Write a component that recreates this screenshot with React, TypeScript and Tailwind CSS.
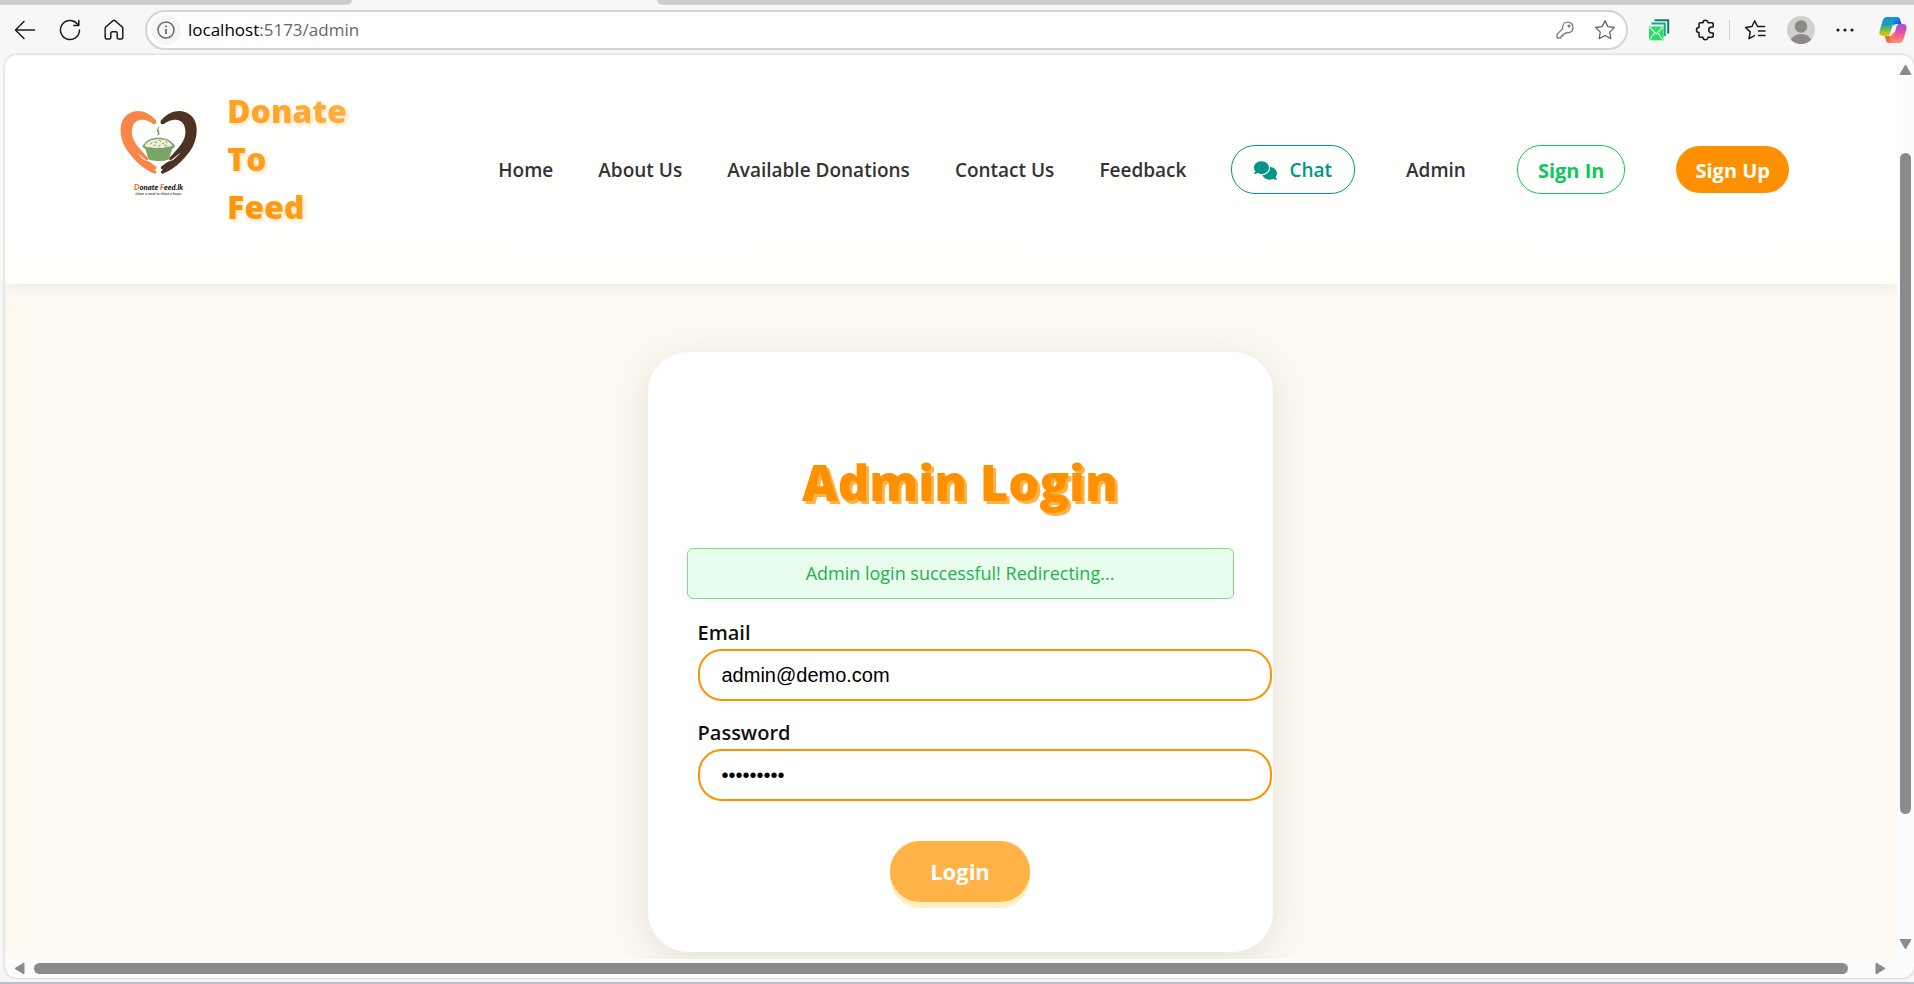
import { useState } from "react";
import { FaComments } from "react-icons/fa6";

const navLinks = ["Home", "About Us", "Available Donations", "Contact Us", "Feedback"];
const siteName = ["Donate", "To", "Feed"];

function BackIcon() {
  return (
    <svg width="22" height="22" viewBox="0 0 22 22" fill="none" stroke="#1b1b1b" strokeWidth="1.5" strokeLinecap="round" strokeLinejoin="round">
      <path d="M20.5 11H2M10 2.5 1.5 11l8.5 8.5" />
    </svg>
  );
}

function ReloadIcon() {
  return (
    <svg width="22" height="22" viewBox="0 0 22 22" fill="none" stroke="#1b1b1b" strokeWidth="1.5" strokeLinecap="round" strokeLinejoin="round">
      <path d="M20.5 11a9.5 9.5 0 1 1-2.6-6.5L19.5 6M19.8 1.5V6.5H14.8" />
    </svg>
  );
}

function HomeIcon() {
  return (
    <svg width="20" height="22" viewBox="0 0 20 22" fill="none" stroke="#1b1b1b" strokeWidth="1.5" strokeLinejoin="round">
      <path d="M1.2 9.6c0-.8.3-1.4.9-1.9L9 1.6c.6-.5 1.4-.5 2 0l6.900 6.100c.6.5.9 1.100.9 1.900V18.500c0 .9-.6 1.500-1.500 1.500h-2.600c-.9 0-1.500-.6-1.500-1.500v-4.200c0-.9-.6-1.500-1.500-1.500H8.300c-.9 0-1.500.6-1.500 1.500v4.200c0 .9-.6 1.500-1.500 1.500H2.700c-.9 0-1.500-.6-1.500-1.500z" />
    </svg>
  );
}

function InfoIcon() {
  return (
    <svg width="18" height="18" viewBox="0 0 18 18" fill="none" stroke="#6a6a6a" strokeWidth="1.5">
      <circle cx="9" cy="9" r="8" />
      <path d="M9 8v5" strokeWidth="1.800" />
      <circle cx="9" cy="5.400" r="1" fill="#6a6a6a" stroke="none" />
    </svg>
  );
}

function KeyIcon() {
  return (
    <svg width="18" height="18" viewBox="0 0 18 18" fill="none" stroke="#6f6f6f" strokeWidth="1.200" strokeLinejoin="round">
      <path d="M11.500 1a5.400 5.400 0 1 1-1.300 10.600L8.800 13H7v1.900H5.200v1.900H1v-3.400l5.700-5.700A5.400 5.400 0 0 1 11.500 1z" />
      <circle cx="13" cy="5" r="1" />
    </svg>
  );
}

function StarIcon() {
  return (
    <svg width="22" height="22" viewBox="0 0 22 22" fill="none" stroke="#666" strokeWidth="1.300" strokeLinejoin="round">
      <path d="m11 1.700 2.900 5.900 6.500.9-4.700 4.600 1.100 6.500L11 16.500l-5.800 3.100 1.100-6.500L1.600 8.500l6.500-.9z" />
    </svg>
  );
}

function MailStackIcon() {
  return (
    <svg width="22" height="22" viewBox="0 0 22 22" fill="none">
      <path d="M6.500 1.200h13.700v13.300" stroke="#0d7f6f" strokeWidth="2" />
      <path d="M3.500 4.600h13.200v12.400" stroke="#14a58e" strokeWidth="2" />
      <rect x="1" y="7.500" width="14.500" height="13.800" fill="#2bdc68" />
      <path d="m1.500 8 6.700 7 6.800-7M1.500 21l5-7M15 21l-5-7" stroke="#d9ffe6" strokeWidth="1.100" />
    </svg>
  );
}

function PuzzleIcon() {
  return (
    <svg width="20" height="22" viewBox="0 0 20 22" fill="none" stroke="#1b1b1b" strokeWidth="1.600" strokeLinejoin="round">
      <path d="M8 3.800a2.500 2.500 0 0 1 5 0H17q1.200 0 1.200 1.200v3h-1.500a3 3 0 0 0 0 6h1.500v3q0 1.200-1.200 1.200H13a2.500 2.500 0 0 1-5 0H5.200Q4 18.200 4 17v-3.500a2.500 2.500 0 0 1 0-5V5q0-1.200 1.200-1.200z" />
    </svg>
  );
}

function FavoritesIcon() {
  return (
    <svg width="22" height="22" viewBox="0 0 22 22" fill="none" stroke="#1b1b1b" strokeWidth="1.500" strokeLinecap="round" strokeLinejoin="round">
      <path d="M13.500 7.500 10.700 1.800 8 7.500l-6.500.9 4.700 4.500-1.200 6.800 5.500-3M13.500 7.600h7M14.500 12h6.500M14.500 16.500h6.500" />
    </svg>
  );
}

function ProfileIcon() {
  return (
    <svg width="28" height="28" viewBox="0 0 28 28">
      <clipPath id="avatar"><circle cx="14" cy="14" r="14" /></clipPath>
      <g clipPath="url(#avatar)">
        <rect width="28" height="28" fill="#d2d0cd" />
        <circle cx="14" cy="10.500" r="6.200" fill="#8b8885" />
        <ellipse cx="14" cy="26" rx="10.500" ry="8" fill="#8b8885" />
      </g>
    </svg>
  );
}

function CopilotIcon() {
  return (
    <svg width="28" height="28" viewBox="0 0 28 28">
      <defs>
        <linearGradient id="cpLeft" x1="0" y1="0" x2="0" y2="1">
          <stop offset="0" stopColor="#1b8fe8" /><stop offset=".4" stopColor="#1c9fb0" /><stop offset=".7" stopColor="#7cc243" /><stop offset="1" stopColor="#f5c400" />
        </linearGradient>
        <linearGradient id="cpRight" x1="0" y1="0" x2="0" y2="1">
          <stop offset="0" stopColor="#a64be0" /><stop offset=".5" stopColor="#e8559f" /><stop offset="1" stopColor="#ff9560" />
        </linearGradient>
        <linearGradient id="cpTop" x1="0" y1="0" x2="1" y2="1">
          <stop offset="0" stopColor="#12b4f0" /><stop offset="1" stopColor="#1440b8" />
        </linearGradient>
        <linearGradient id="cpBottom" x1="0" y1="0" x2="1" y2="0">
          <stop offset="0" stopColor="#f0632f" /><stop offset="1" stopColor="#f78a6c" />
        </linearGradient>
      </defs>
      <path d="M12 1h6c1.800 0 2.700 1 3.200 2.700L22.500 8h-5c-1.500 0-2.300.7-2.800 2.300z" fill="url(#cpTop)" />
      <path d="M16 27h-6c-1.800 0-2.600-1-3.100-2.700L5.800 20h4.700c1.500 0 2.300-.7 2.800-2.300l2.500-2z" fill="url(#cpBottom)" />
      <path d="M7.500 1H18c-1.500 0-2.200 1-2.700 2.700L11 17.500c-.6 1.700-1.500 2.500-3.200 2.500H4c-3.200 0-4.200-2.200-3.300-5.500L3.500 5C4.300 2.300 5.500 1 7.500 1z" fill="url(#cpLeft)" />
      <path d="M20.500 27H11c1.500 0 2.200-1 2.700-2.700L17.500 10.500C18 8.800 18.900 8 20.500 8H24c3.200 0 4.200 2.200 3.300 5.500L24.500 23c-.8 2.700-2 4-4 4z" fill="url(#cpRight)" />
    </svg>
  );
}

function Logo() {
  return (
    <svg className="mb-3 h-[94px] w-[87px] shrink-0" viewBox="15 18 261 282" role="img" aria-label="Donate Feed.lk">
      <path d="M137 71C140 66 140 62 134 57C108 31 77 26 52 44C26 63 27 107 45 140C62 171 97 206 130 220C137 223 142 218 138 213L132 208C139 210 142 204 137 199L123 188C114 182 105 183 99 177L80 158C91 164 100 175 109 180C114 182 117 177 112 172C94 151 72 131 67 108C62 82 72 60 94 59C112 59 121 66 128 71C131 73 135 73 137 71Z" fill="#f98649" />
      <path d="M153 71C150 66 151 62 157 57C183 31 215 26 240 44C266 63 265 107 248 140C231 171 195 206 162 220C155 223 150 218 154 213L160 208C153 210 150 204 155 199L169 188C178 182 187 183 193 177L212 158C201 164 192 175 183 180C178 182 175 177 180 172C198 151 220 131 225 108C230 82 220 60 198 59C180 59 170 66 163 71C160 73 156 73 153 71Z" fill="#4d3323" />
      <path d="M103 131C111 120 124 113 146 113C167 113 181 120 190 131L195 138C194 142 191 144 187 146L177 177C171 185 121 185 115 177L106 146C101 144 98 142 97 138Z" fill="#79a566" />
      <path d="M104 137C112 124 126 118 146 118C166 118 179 124 187 137C181 142 173 138 166 142C158 146 150 142 142 144C132 146 125 141 118 142C112 142 107 141 104 137Z" fill="#f1eddd" />
      <path d="m121 132 6-4m7-2 6 1m8-5 5 2m4 6 6 2m3-7 6 3m-41 7 6 1m8 3 6-3m13 0 6 1" stroke="#6b9a55" strokeWidth="3" />
      <path d="M147 81C136 89 154 94 143 105M143 90C140 96 149 98 147 103" stroke="#5f9150" strokeWidth="3" fill="none" strokeLinecap="round" />
      <text x="146" y="270" textAnchor="middle" fontSize="23" fontStyle="italic" fontWeight="900" fontFamily="Lato, sans-serif" fill="#171311">
        <tspan fill="#f2602a">D</tspan>onate <tspan fill="#f2602a">F</tspan>eed.lk
      </text>
      <text x="146" y="285" textAnchor="middle" fontSize="10" fontWeight="700" fontFamily="Liberation Sans, sans-serif" fill="#555">share a meal to share a hope.</text>
    </svg>
  );
}

function Arrow({ points }: { points: string }) {
  return (
    <svg width="13" height="13" viewBox="0 0 13 13" className="shrink-0" fill="#8b8b8b" stroke="#8b8b8b" strokeWidth="1" strokeLinejoin="round">
      <polygon points={points} />
    </svg>
  );
}

function BrowserBar() {
  return (
    <div className="shrink-0">
      <div className="flex h-[5px] w-full">
        <div className="h-[5px] w-[18.4%] rounded-br-lg border-b border-[#dcdcdc] bg-[#cdcdcd]" />
        <div className="h-[5px] flex-1 bg-[#f7f7f7]" />
        <div className="h-[5px] w-[65.7%] rounded-bl-lg border-b border-[#dcdcdc] bg-[#cdcdcd]" />
      </div>
      <div className="flex h-[49px] items-center pr-[7px] pl-3.5">
        <div className="flex w-[131px] shrink-0 items-center gap-[23px]">
          <button aria-label="Back"><BackIcon /></button>
          <button aria-label="Refresh"><ReloadIcon /></button>
          <button aria-label="Home"><HomeIcon /></button>
        </div>
        <div className="flex h-10 flex-1 items-center rounded-full border-2 border-[#d4d4d4] bg-white pr-2.5 pl-1">
          <button aria-label="View site information" className="flex size-[30px] items-center justify-center rounded-full bg-[#f5f5f5]"><InfoIcon /></button>
          <div className="ml-[7px] flex-1 text-[17px] text-[#666]"><span className="text-black">localhost</span>:5173/admin</div>
          <div className="flex items-center gap-5">
            <button aria-label="Saved passwords"><KeyIcon /></button>
            <button aria-label="Add to favorites"><StarIcon /></button>
          </div>
        </div>
        <div className="ml-5 flex shrink-0 items-center gap-[25px]">
          <button aria-label="Mail"><MailStackIcon /></button>
          <button aria-label="Extensions"><PuzzleIcon /></button>
          <div className="-mx-[11px] h-5 w-px bg-[#cfcfcf]" />
          <button aria-label="Favorites"><FavoritesIcon /></button>
          <button aria-label="Profile" className="-mx-1"><ProfileIcon /></button>
          <button aria-label="Settings and more">
            <svg width="18" height="6" viewBox="0 0 18 6" fill="#1b1b1b"><circle cx="2" cy="3" r="1.600" /><circle cx="9" cy="3" r="1.600" /><circle cx="16" cy="3" r="1.600" /></svg>
          </button>
          <button aria-label="Copilot"><CopilotIcon /></button>
        </div>
      </div>
    </div>
  );
}

function SiteHeader() {
  return (
    <header className="z-10 flex min-h-[229px] shrink-0 items-center justify-between bg-linear-to-b from-white to-[#fffffc] pr-[108px] pl-[110px] shadow-[0_2px_16px_rgba(0,0,0,0.07)]">
      <div className="flex items-center gap-[25px] pb-[22px]">
        <Logo />
        <div className="bg-linear-[45deg,#ff9100,#ffb347] bg-clip-text text-[32px] leading-[48px] font-extrabold text-transparent drop-shadow-[2px_2px_2px_rgba(255,145,0,0.25)]">
          {siteName.map((word) => <span key={word} className="block">{word}</span>)}
        </div>
      </div>
      <nav className="flex items-center text-[19px] font-semibold whitespace-nowrap text-[#333]">
        <div className="flex items-center gap-[45px] pt-0.5 pr-[45px]">
          {navLinks.map((label) => <a key={label} href="#">{label}</a>)}
        </div>
        <div className="flex items-center gap-[51px]">
          <a href="#" className="flex h-[49px] items-center gap-3 rounded-3xl border border-[#009688] px-[22px] pt-0.5 text-[#009688]">
            <FaComments className="size-[23px]" />
            Chat
          </a>
          <a href="#" className="pt-0.5">Admin</a>
          <a href="#" className="flex h-[49px] items-center rounded-3xl border border-[#0bc95b] px-5 pt-0.5 text-xl font-bold text-[#0bc95b]">Sign In</a>
          <a href="#" className="flex h-[47px] items-center rounded-3xl bg-[#ff9100] px-[19px] pt-0.5 text-xl font-bold text-white">Sign Up</a>
        </div>
      </nav>
    </header>
  );
}

function LoginCard() {
  const [email, setEmail] = useState("admin@demo.com");
  const [password, setPassword] = useState("demoadmin");
  const field = "h-[52px] w-full rounded-3xl border-2 border-[#ff9100] bg-white px-[22px] font-['Liberation_Sans',sans-serif] text-xl text-black outline-none";
  return (
    <section className="w-full max-w-[625px] rounded-[40px] bg-white px-[39px] pt-[100px] pb-[50px] shadow-[0_8px_40px_rgba(0,0,0,0.1)]">
      <h1 className="text-center text-[49px] leading-[60px] font-extrabold text-[#ff9100] text-shadow-[3px_3px_0_#ffb347]">Admin Login</h1>
      <div role="status" className="mt-9 rounded-md border border-[#7ddf85] bg-[#e9fdee] py-3 text-center text-lg leading-[25px] text-[#22b14c]">Admin login successful! Redirecting...</div>
      <form className="mt-5" onSubmit={(e) => e.preventDefault()}>
        <div className="-mr-[38px] flex flex-col gap-[18px] pl-[11px]">
          <div className="flex flex-col gap-0.5">
            <label htmlFor="email" className="text-xl font-semibold text-[#111]">Email</label>
            <input id="email" type="email" value={email} onChange={(e) => setEmail(e.target.value)} className={field} />
          </div>
          <div className="flex flex-col gap-0.5">
            <label htmlFor="password" className="text-xl font-semibold text-[#111]">Password</label>
            <input id="password" type="password" value={password} onChange={(e) => setPassword(e.target.value)} className={field} />
          </div>
        </div>
        <div className="mt-10 flex justify-center">
          <button type="submit" className="h-[61px] rounded-[30px] bg-[#ffb347] px-10 text-[22px] font-bold text-white shadow-[0_6px_0_#fff0c2]">Login</button>
        </div>
      </form>
    </section>
  );
}

export default function App() {
  return (
    <div className="flex h-screen flex-col overflow-hidden border-b-2 border-[#b9c0cf] bg-[#f7f7f7] font-['Open_Sans','Noto_Sans',sans-serif]">
      <BrowserBar />
      <div className="mt-px mb-1 ml-[5px] flex min-h-0 flex-1 flex-col overflow-hidden rounded-xl bg-[#fcfcfc] shadow-[0_0_3px_rgba(0,0,0,0.25)]">
        <div className="flex min-h-0 flex-1">
          <div className="flex min-w-0 flex-1 flex-col overflow-hidden bg-[#fdf8f0]">
            <SiteHeader />
            <main className="flex shrink-0 justify-center pt-[68px] pl-[18px]">
              <LoginCard />
            </main>
          </div>
          <div className="flex w-[17px] shrink-0 flex-col items-center pt-2 pb-2">
            <Arrow points="6.500,2 12,11.500 1,11.500" />
            <div className="mt-[77px] w-[11px] flex-1 rounded-full bg-[#8b8b8b]" />
            <div className="h-[124px]" />
            <Arrow points="6.500,11 12,1.500 1,1.500" />
          </div>
        </div>
        <div className="flex h-[19px] shrink-0 items-center pr-[27px] pl-2">
          <Arrow points="2,6.500 11,1 11,12" />
          <div className="ml-2 h-[11px] flex-1 rounded-full bg-[#8b8b8b]" />
          <div className="w-[26px]" />
          <Arrow points="11,6.500 2,1 2,12" />
        </div>
      </div>
    </div>
  );
}
